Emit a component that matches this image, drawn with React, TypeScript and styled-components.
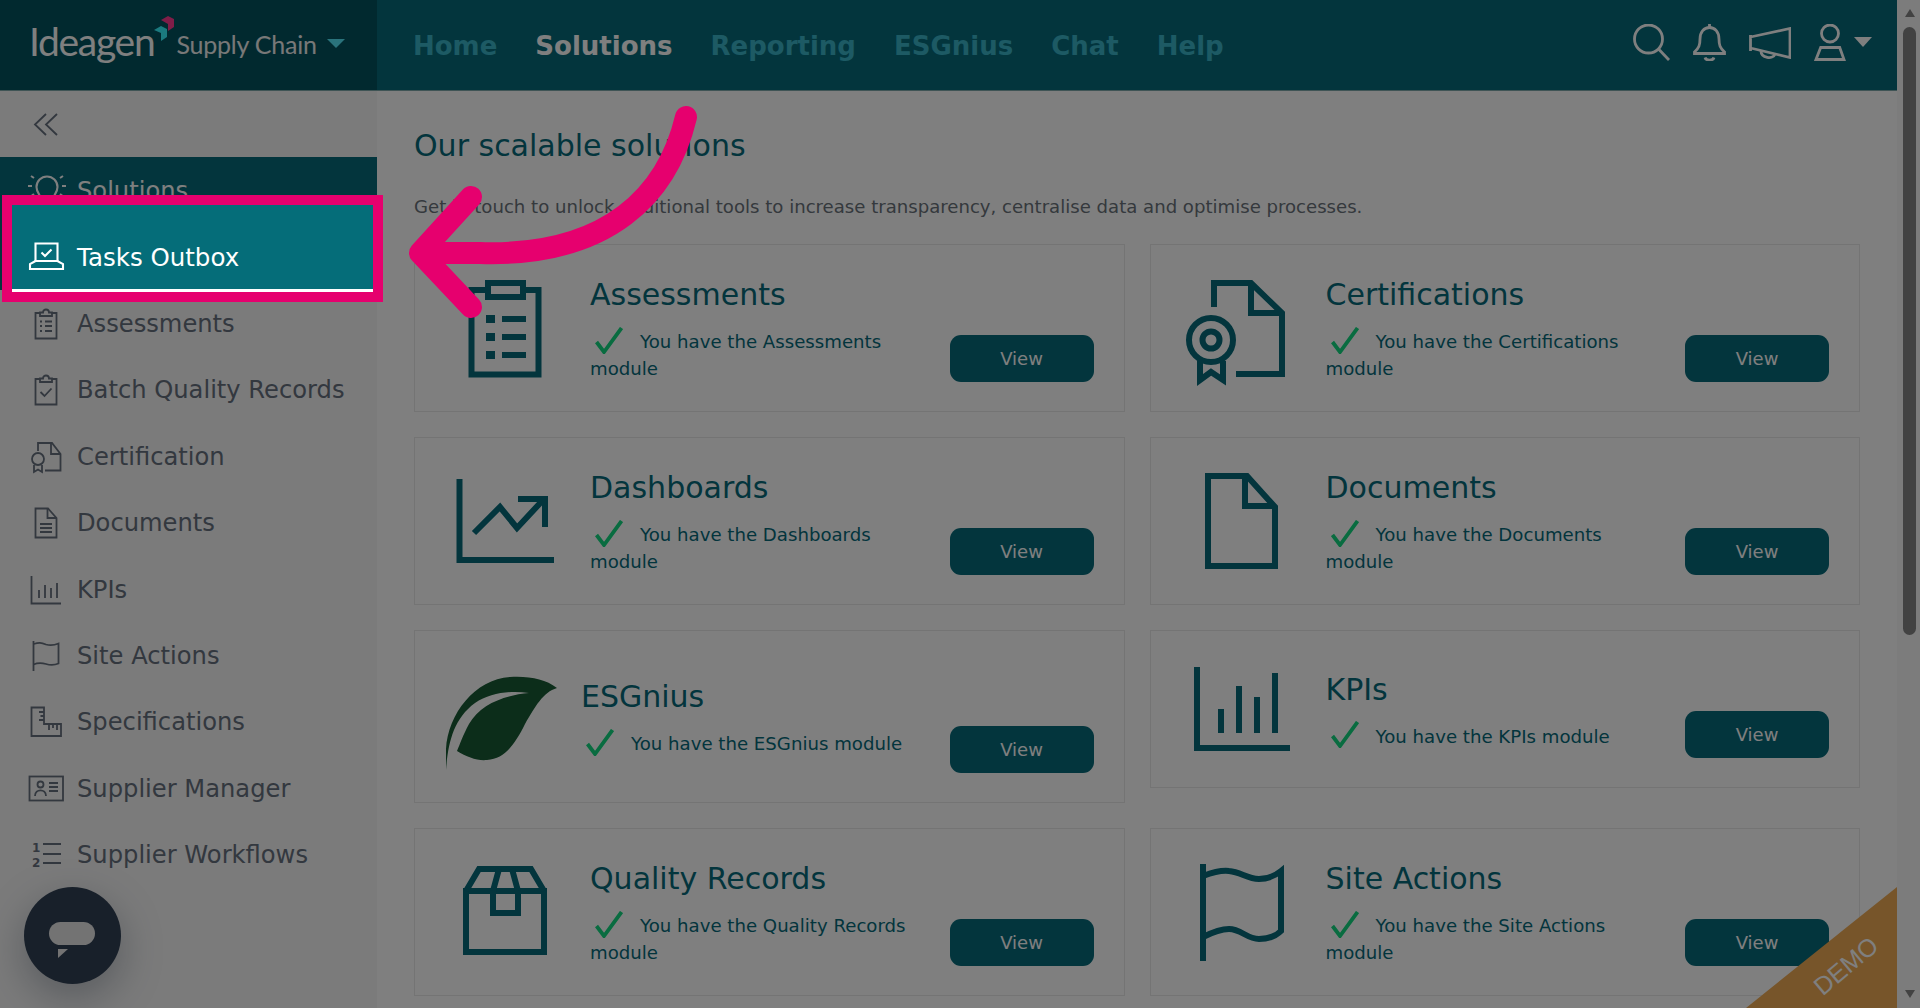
import * as React from 'react'
import styled, { createGlobalStyle } from 'styled-components'

const TEAL = '#066a7a'
const SIDE_TEXT = '#66707e'

const GlobalStyle = createGlobalStyle`
  html, body {
    margin: 0;
    padding: 0;
    overflow: hidden;
    background: #fff;
  }
  * {
    box-sizing: border-box;
  }
`

const Page = styled.div`
  position: relative;
  display: flex;
  width: 1920px;
  height: 1008px;
  overflow: hidden;
  font-family: 'DejaVu Sans', Verdana, sans-serif;
`

const Shell = styled.div`
  display: flex;
  flex-direction: column;
  width: 1897px;
  height: 100%;
`

const Header = styled.header`
  display: flex;
  flex: none;
  height: 91px;
  background: ${TEAL};
  border-bottom: 1px solid #7fa8ab;
`

const Brand = styled.div`
  display: flex;
  align-items: center;
  flex: none;
  width: 377px;
  padding-left: 29px;
  background: #02525e;
`

const LogoWord = styled.span`
  font-family: Lato, sans-serif;
  font-weight: 400;
  font-size: 39px;
  letter-spacing: -1.3px;
  color: #fff;
  margin-top: -8px;
`

const LogoMark = styled.svg`
  flex: none;
  width: 22px;
  height: 28px;
  margin: -33px 1px 0 -1px;
`

const Product = styled.span`
  font-family: Lato, sans-serif;
  font-weight: 400;
  font-size: 25px;
  letter-spacing: -0.2px;
  color: #f0f0f0;
  margin-top: -3px;
`

const BrandCaret = styled.span`
  width: 0;
  height: 0;
  margin: -3px 0 0 10px;
  border-left: 9px solid transparent;
  border-right: 9px solid transparent;
  border-top: 9px solid #54e6f8;
`

const Nav = styled.nav`
  display: flex;
  align-items: center;
  gap: 38px;
  padding: 2px 0 0 36px;
`

const NavLink = styled.a<{ $active?: boolean }>`
  font-size: 26px;
  font-weight: 700;
  color: ${p => (p.$active ? '#fff' : '#3ab4c8')};
`

const Actions = styled.div`
  display: flex;
  align-items: center;
  gap: 23px;
  margin-left: auto;
  padding: 0 25px 5px 0;
`

const ActionIcon = styled.svg`
  display: block;
  fill: none;
  stroke: #fff;
  stroke-width: 2.8;
`

const UserGroup = styled.div`
  display: flex;
  align-items: center;
  gap: 8px;
`

const UserCaret = styled.span`
  width: 0;
  height: 0;
  margin-top: -2px;
  border-left: 9px solid transparent;
  border-right: 9px solid transparent;
  border-top: 10px solid #fff;
`

const Body = styled.div`
  display: flex;
  flex: 1;
  min-height: 0;
`

const Sidebar = styled.aside`
  flex: none;
  width: 377px;
  background: #f6f6f6;
`

const Collapse = styled.div`
  display: flex;
  align-items: center;
  height: 66px;
  padding-left: 33px;
`

const SideItem = styled.div<{ $active?: boolean }>`
  display: flex;
  align-items: center;
  gap: 15px;
  height: 66.4px;
  padding: 2px 0 0 30px;
  font-size: 24.2px;
  color: ${p => (p.$active ? '#fff' : SIDE_TEXT)};
  background: ${p => (p.$active ? TEAL : 'transparent')};
`

const SideIcon = styled.svg<{ $light?: boolean }>`
  flex: none;
  display: block;
  width: 32px;
  height: 32px;
  overflow: visible;
  fill: none;
  stroke: ${p => (p.$light ? '#fff' : SIDE_TEXT)};
  stroke-width: ${p => (p.$light ? 2.1 : 1.8)};

  text {
    font-family: 'DejaVu Sans', sans-serif;
    font-size: 12px;
    font-weight: 700;
    fill: ${SIDE_TEXT};
    stroke: none;
  }
`

const Main = styled.main`
  flex: 1;
  min-width: 0;
  padding: 35px 37px 0;
  background: #fff;
`

const Heading = styled.h1`
  margin: 0;
  font-size: 30px;
  font-weight: 400;
  line-height: 40px;
  color: ${TEAL};
`

const Intro = styled.p`
  margin: 27px 0 24px;
  font-size: 18.1px;
  line-height: 27px;
  color: #6a727a;
`

const Cards = styled.div`
  display: grid;
  grid-template-columns: 1fr 1fr;
  align-items: start;
  gap: 25px;
`

const Card = styled.section`
  display: flex;
  align-items: center;
  padding: 29px 30px;
  border: 1px solid #e8e8e8;
`

const IconCol = styled.div<{ $leaf?: boolean }>`
  display: flex;
  align-items: center;
  flex: none;
  width: ${p => (p.$leaf ? '136px' : '145px')};
  height: ${p => (p.$leaf ? '113px' : '98px')};
  padding-left: ${p => (p.$leaf ? '0' : '10px')};
`

const BigIcon = styled.svg`
  flex: none;
  display: block;
  width: 100px;
  height: 100px;
  overflow: visible;
  fill: none;
  stroke: ${TEAL};
  stroke-width: 6;
`

const Leaf = styled.svg`
  flex: none;
  display: block;
  width: 112px;
  height: 115px;
`

const CardText = styled.div`
  flex: 1;
  min-width: 0;
`

const CardTitle = styled.h2`
  margin: 1px 0 13px;
  font-size: 30px;
  font-weight: 400;
  line-height: 40px;
  color: ${TEAL};
`

const CardNote = styled.p`
  margin: 0;
  font-size: 18.15px;
  line-height: 27px;
  color: ${TEAL};
`

const Check = styled.svg`
  display: inline-block;
  width: 28px;
  height: 27px;
  margin: -6px 17px 0 5px;
  vertical-align: middle;
  fill: none;
  stroke: #12d880;
  stroke-width: 3.8;
`

const ViewButton = styled.button`
  flex: none;
  align-self: flex-end;
  width: 144px;
  height: 47px;
  margin-left: 19px;
  border: 0;
  border-radius: 11px;
  font-family: inherit;
  font-size: 18px;
  color: #fff;
  background: ${TEAL};
`

const ScrollTrack = styled.div`
  display: flex;
  flex-direction: column;
  align-items: center;
  flex: none;
  width: 23px;
  height: 100%;
  padding: 9px 0 10px 2px;
  background: #f8f8f8;
`

const ScrollArrow = styled.span<{ $down?: boolean }>`
  width: 0;
  height: 0;
  border-left: 5.5px solid transparent;
  border-right: 5.5px solid transparent;
  ${p => (p.$down ? 'border-top: 8px solid #848484;' : 'border-bottom: 8px solid #848484;')}
  ${p => (p.$down ? 'margin-top: auto;' : '')}
`

const ScrollThumb = styled.div`
  width: 13px;
  height: 608px;
  margin-top: 10px;
  border-radius: 7px;
  background: #848484;
`

const Demo = styled.div`
  position: absolute;
  right: 23px;
  bottom: 0;
  width: 151px;
  height: 121px;
  clip-path: polygon(100% 0, 100% 100%, 0 100%);
  background: #eeaa54;
`

const DemoText = styled.span`
  position: absolute;
  left: 100px;
  top: 79px;
  transform: translate(-50%, -50%) rotate(-40deg);
  font-family: 'Liberation Sans', sans-serif;
  font-size: 25px;
  color: #fff;
`

const Chat = styled.div`
  position: absolute;
  left: 24px;
  top: 887px;
  width: 97px;
  height: 97px;
  border-radius: 50%;
  background: #304054;
  box-shadow: 0 14px 40px rgba(48, 64, 84, 0.35);
`

const ChatPill = styled.span`
  position: absolute;
  left: 25px;
  top: 35px;
  width: 46px;
  height: 23px;
  border-radius: 12px;
  background: #e6e6e6;
`

const ChatTail = styled.span`
  position: absolute;
  left: 34px;
  top: 62px;
  width: 10px;
  height: 9px;
  clip-path: polygon(0 100%, 100% 0, 0 0);
  background: #e6e6e6;
`

const Dim = styled.div`
  position: absolute;
  inset: 0;
  background: rgba(0, 0, 0, 0.5);
`

const Spotlight = styled.div`
  position: absolute;
  left: 2px;
  top: 195px;
  width: 381px;
  height: 107px;
  border: 10px solid #e6006e;
  background: ${TEAL};
`

const SpotlightItem = styled.div`
  display: flex;
  align-items: center;
  gap: 15px;
  height: 87px;
  padding: 20px 0 0 18px;
  border-bottom: 3px solid #fff;
  font-size: 24.5px;
  color: #fff;
  background: #056d79;
`

const ArrowLayer = styled.svg`
  position: absolute;
  left: 0;
  top: 0;
  width: 1920px;
  height: 1008px;
  fill: none;
  stroke: #e6006e;
  stroke-width: 22;
  stroke-linecap: round;
  stroke-linejoin: round;
  pointer-events: none;
`

const AssessmentsIcon = () => (
  <BigIcon viewBox="0 0 100 100">
    <path d="M30 12H16.5V96.5H83.5V12H71" />
    <rect x="33" y="5" width="35" height="14" />
    <path d="M31 41h9M31 59h9M31 77h9" strokeWidth="8" />
    <path d="M47 41h24M47 59h24M47 77h24" />
  </BigIcon>
)

const CertificationsIcon = () => (
  <BigIcon viewBox="0 0 100 100">
    <path d="M23 29V5H60L91 35V96H45" />
    <path d="M60 5V35H91" />
    <circle cx="20" cy="62" r="22" />
    <circle cx="20" cy="62" r="8.5" />
    <path d="M9 83V102L20 94L32 102V83" />
  </BigIcon>
)

const DashboardsIcon = () => (
  <BigIcon viewBox="0 0 100 100">
    <path d="M4.5 8V89H99" />
    <path d="M19 62L45 36L62 57L88 29" />
    <path d="M63 28H90V56" />
  </BigIcon>
)

const DocumentsIcon = () => (
  <BigIcon viewBox="0 0 100 100">
    <path d="M17 5H56L84 36V95H17Z" />
    <path d="M54 5V35H84" />
  </BigIcon>
)

const KpisIcon = () => (
  <BigIcon viewBox="0 0 100 100">
    <path d="M6 8V89H99" />
    <path d="M30 50V74M48 27V74M66 38V74M84 14V74" />
  </BigIcon>
)

const QualityIcon = () => (
  <BigIcon viewBox="0 0 100 100">
    <path d="M11 29H89V90H11Z" />
    <path d="M11 29L24 7H76L89 29" />
    <path d="M44 7L38 29M57 7L63 29" />
    <path d="M38 29V51H63V29" />
  </BigIcon>
)

const SiteActionsIcon = () => (
  <BigIcon viewBox="0 0 100 100">
    <path d="M12 2V99" />
    <path d="M12 14C20 11 30 8 38 9C50 10 56 17 68 17C78 17 85 13 90 9V69C85 74 78 77 68 77C56 77 50 67 38 67C30 67 20 71 12 75" />
  </BigIcon>
)

const EsgLeaf = () => (
  <Leaf viewBox="0 0 112 115">
    <path
      fill="#185a34"
      d="M112 29C100 20 85 17 65 18C30 20 3 55 1 90L1 111C3 85 8 60 30 44C45 34 65 31 84 34C60 36 35 45 24 65C18 76 15 85 12 92C22 98 32 102 42 101C60 100 70 85 80 65C90 48 98 33 112 29Z"
    />
  </Leaf>
)

const cards = [
  { title: 'Assessments', note: 'You have the Assessments module', icon: <AssessmentsIcon /> },
  { title: 'Certifications', note: 'You have the Certifications module', icon: <CertificationsIcon /> },
  { title: 'Dashboards', note: 'You have the Dashboards module', icon: <DashboardsIcon /> },
  { title: 'Documents', note: 'You have the Documents module', icon: <DocumentsIcon /> },
  { title: 'ESGnius', note: 'You have the ESGnius module', icon: <EsgLeaf />, leaf: true },
  { title: 'KPIs', note: 'You have the KPIs module', icon: <KpisIcon /> },
  { title: 'Quality Records', note: 'You have the Quality Records module', icon: <QualityIcon /> },
  { title: 'Site Actions', note: 'You have the Site Actions module', icon: <SiteActionsIcon /> },
]

const TasksGlyph = () => (
  <SideIcon viewBox="0 0 32 32" $light>
    <path d="M5.5 20V2.5H27.5V20" />
    <path d="M5.5 20L0 23V28H33V23L27.5 20H5.5Z" />
    <path d="M11.5 11.5L15 15L21.5 8.5" />
  </SideIcon>
)

const sideItems = [
  {
    label: 'Solutions',
    active: true,
    icon: (
      <SideIcon viewBox="0 0 32 32" $light>
        <path d="M11 25C11 20 6.5 18 6.5 12A10.5 10.5 0 0 1 27.5 12C27.5 18 23 20 23 25Z" />
        <path d="M-2 11H2M32 11H36M1 1L4 3M33 1L30 3M0 22L4 19M34 22L30 19" />
      </SideIcon>
    ),
  },
  { label: 'Tasks Outbox', active: true, icon: <TasksGlyph /> },
  {
    label: 'Assessments',
    icon: (
      <SideIcon viewBox="0 0 32 32">
        <path d="M10 5H5.5V30.5H26.5V5H22" />
        <path d="M10 8V4.5H13C13 .5 19 .5 19 4.5H22V8Z" />
        <path d="M10 13.5h2M10 18h2M10 23h2" />
        <path d="M15 13.5h7M15 18h7M15 23h7" />
      </SideIcon>
    ),
  },
  {
    label: 'Batch Quality Records',
    icon: (
      <SideIcon viewBox="0 0 32 32">
        <path d="M10 5H5.5V30.5H26.5V5H22" />
        <path d="M10 8V4.5H13C13 .5 19 .5 19 4.5H22V8Z" />
        <path d="M10.5 18L14.5 22L21.5 14.5" />
      </SideIcon>
    ),
  },
  {
    label: 'Certification',
    icon: (
      <SideIcon viewBox="0 0 32 32">
        <path d="M8 10V2H22L30.5 13V29.5H15" />
        <path d="M21 2V13H30.5" />
        <circle cx="8" cy="18" r="6" />
        <path d="M4 24V31L8 28.5L12 31V24" />
      </SideIcon>
    ),
  },
  {
    label: 'Documents',
    icon: (
      <SideIcon viewBox="0 0 32 32">
        <path d="M5.5 1.5H18L26.5 11V30.5H5.5Z" />
        <path d="M17.5 1.5V11H26.5" />
        <path d="M10 17H22M10 21H22M10 25H22" />
      </SideIcon>
    ),
  },
  {
    label: 'KPIs',
    icon: (
      <SideIcon viewBox="0 0 32 32">
        <path d="M1.5 2V29.5H31" />
        <path d="M9 16V24M15 11V24M21 14V24M27 9V24" />
      </SideIcon>
    ),
  },
  {
    label: 'Site Actions',
    icon: (
      <SideIcon viewBox="0 0 32 32">
        <path d="M3.5 1V31" />
        <path d="M3.5 4C9 2.5 11 2.5 16 4.5C21 6 25 5 28.5 3.5V23.5C25 25 21 25.5 16 24C11 22.5 8 22.5 3.5 24.5" />
      </SideIcon>
    ),
  },
  {
    label: 'Specifications',
    icon: (
      <SideIcon viewBox="0 0 32 32">
        <path d="M1.5 1.5H14V18H31V30H1.5Z" />
        <path d="M14 6H9M14 10H10.5M14 14H9M19 18V24M23 18V22M27 18V24" />
      </SideIcon>
    ),
  },
  {
    label: 'Supplier Manager',
    icon: (
      <SideIcon viewBox="0 0 32 32">
        <rect x="-0.5" y="3.5" width="33.5" height="24" />
        <circle cx="10.5" cy="11.5" r="3" />
        <path d="M5 23C5 15.5 16 15.5 16 23" />
        <path d="M19 10H28M19 14H28M19 18H28" />
      </SideIcon>
    ),
  },
  {
    label: 'Supplier Workflows',
    icon: (
      <SideIcon viewBox="0 0 32 32">
        <text x="2" y="13">1</text>
        <text x="2" y="28">2</text>
        <path d="M13 5H31M13 15H31M13 24H31" />
      </SideIcon>
    ),
  },
]

export default function App() {
  return (
    <Page>
      <GlobalStyle />
      <Shell>
        <Header>
          <Brand>
            <LogoWord>Ideagen</LogoWord>
            <LogoMark viewBox="0 0 22 28">
              <path fill="#ff3a90" d="M8 5L15 1L21 4V12L15 16V9Z" />
              <path fill="#36f4ff" d="M1 15L8 11L14 14V22L8 26V18Z" />
            </LogoMark>
            <Product>Supply Chain</Product>
            <BrandCaret />
          </Brand>
          <Nav>
            <NavLink>Home</NavLink>
            <NavLink $active>Solutions</NavLink>
            <NavLink>Reporting</NavLink>
            <NavLink>ESGnius</NavLink>
            <NavLink>Chat</NavLink>
            <NavLink>Help</NavLink>
          </Nav>
          <Actions>
            <ActionIcon width="37" height="37" viewBox="0 0 37 37">
              <circle cx="15.5" cy="15" r="14" />
              <path d="M25.5 25L36 36" />
            </ActionIcon>
            <ActionIcon width="33" height="37" viewBox="0 0 33 37">
              <path d="M1.5 29V28C6 24 7 21 7 15C7 8 11 3.5 16.5 3.5C22 3.5 26 8 26 15C26 21 27 24 31.5 28V29.5H1.5Z" />
              <path d="M16.5 0V3.5M12 33.5C13 37 20 37 21 33.5" />
            </ActionIcon>
            <ActionIcon width="42" height="32" viewBox="0 0 42 32">
              <path d="M1.5 8V24M1.5 10L41 1.5V30.5L1.5 21" />
              <path d="M12 24C12 31 24 33 26 27" />
            </ActionIcon>
            <UserGroup>
              <ActionIcon width="32" height="37" viewBox="0 0 32 37">
                <circle cx="16" cy="9.5" r="8.5" />
                <path d="M6.7 23.5H25.7L30 35.5H2Z" />
              </ActionIcon>
              <UserCaret />
            </UserGroup>
          </Actions>
        </Header>
        <Body>
          <Sidebar>
            <Collapse>
              <SideIcon viewBox="0 0 32 32">
                <path d="M13 6L2 16.5L13 27M24 6L13 16.5L24 27" />
              </SideIcon>
            </Collapse>
            {sideItems.map(item => (
              <SideItem key={item.label} $active={item.active}>
                {item.icon}
                {item.label}
              </SideItem>
            ))}
          </Sidebar>
          <Main>
            <Heading>Our scalable solutions</Heading>
            <Intro>
              Get in touch to unlock additional tools to increase transparency, centralise data and
              optimise processes.
            </Intro>
            <Cards>
              {cards.map(card => (
                <Card key={card.title}>
                  <IconCol $leaf={card.leaf}>{card.icon}</IconCol>
                  <CardText>
                    <CardTitle>{card.title}</CardTitle>
                    <CardNote>
                      <Check viewBox="0 0 28 27">
                        <path d="M1.5 15L9 25L26.5 1" />
                      </Check>
                      {card.note}
                    </CardNote>
                  </CardText>
                  <ViewButton>View</ViewButton>
                </Card>
              ))}
            </Cards>
          </Main>
        </Body>
      </Shell>
      <ScrollTrack>
        <ScrollArrow />
        <ScrollThumb />
        <ScrollArrow $down />
      </ScrollTrack>
      <Demo>
        <DemoText>DEMO</DemoText>
      </Demo>
      <Chat>
        <ChatPill />
        <ChatTail />
      </Chat>
      <Dim />
      <Spotlight>
        <SpotlightItem>
          <TasksGlyph />
          Tasks Outbox
        </SpotlightItem>
      </Spotlight>
      <ArrowLayer viewBox="0 0 1920 1008">
        <path d="M686 117C668 193 610 257 480 253L424 253" />
        <path d="M471 197L420 253L471 307" />
      </ArrowLayer>
    </Page>
  )
}
